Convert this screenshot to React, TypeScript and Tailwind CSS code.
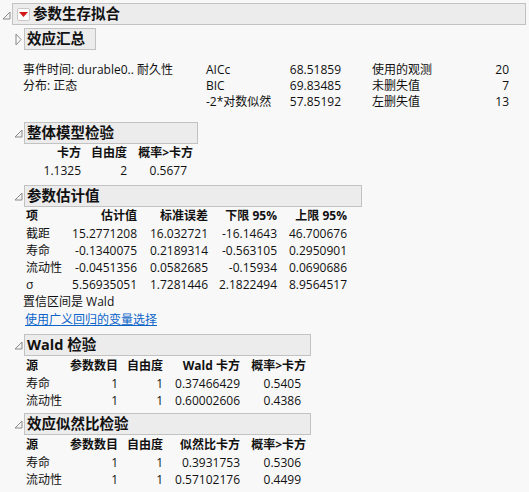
import React from "react";

const FONT = { fontFamily: '"Open Sans", "Noto Sans CJK SC", sans-serif' };

function OpenTri() {
  return (
    <svg width="9" height="9" viewBox="0 0 9 9" className="block">
      <polygon points="8,1 8,8 1,8" fill="#f4f4f4" stroke="#8a8a8a" strokeWidth="1" />
    </svg>
  );
}

function ClosedTri() {
  return (
    <svg width="7" height="13" viewBox="0 0 7 13" className="block">
      <polygon points="1,1 6,6.5 1,12" fill="#fafafa" stroke="#8a8a8a" strokeWidth="1" />
    </svg>
  );
}

function RedMenu() {
  return (
    <span className="flex h-[13px] w-[13px] items-center justify-center rounded-[2px] border border-[#c8c8c8] bg-[#fdfdfd]">
      <svg width="9" height="5" viewBox="0 0 9 5" className="block">
        <polygon points="0,0 9,0 4.5,5" fill="#d31818" />
      </svg>
    </span>
  );
}

interface HeaderProps {
  title: string;
  width: string;
  open?: boolean;
}

function SectionHeader({ title, width, open = true }: HeaderProps) {
  return (
    <div className="flex h-[22px] items-center pl-[12px]">
      <span className={`flex w-[12px] ${open ? "justify-start pl-[2px] pt-[1px]" : "justify-end pr-[2px]"}`}>
        {open ? <OpenTri /> : <ClosedTri />}
      </span>
      <div
        className={`flex h-[22px] items-center border-[1.5px] border-[#c2c2c2] bg-[#ececec] pl-[2px] text-[14.5px] font-bold text-[#111] ${width}`}
      >
        {title}
      </div>
    </div>
  );
}

const num = "text-right whitespace-nowrap";

export default function App() {
  const estimates = [
    ["截距", "15.2771208", "16.032721", "-16.14643", "46.700676"],
    ["寿命", "-0.1340075", "0.2189314", "-0.563105", "0.2950901"],
    ["流动性", "-0.0451356", "0.0582685", "-0.15934", "0.0690686"],
    ["σ", "5.56935051", "1.7281446", "2.1822494", "8.9564517"],
  ];
  const wald = [
    ["寿命", "1", "1", "0.37466429", "0.5405"],
    ["流动性", "1", "1", "0.60002606", "0.4386"],
  ];
  const lr = [
    ["寿命", "1", "1", "0.3931753", "0.5306"],
    ["流动性", "1", "1", "0.57102176", "0.4499"],
  ];

  return (
    <div className="min-h-screen bg-[#f8f8f8] pt-[3px] text-[12px] text-[#111]" style={FONT}>
      {/* top level outline */}
      <div className="flex h-[22px] items-center">
        <span className="flex w-[12px] pl-[2px] pt-[2px]">
          <OpenTri />
        </span>
        <div className="flex h-[22px] w-[514px] items-center gap-[3px] border-[1.5px] border-[#c2c2c2] bg-[#ececec] pl-[4px] text-[14.5px] font-bold">
          <RedMenu />
          <span>参数生存拟合</span>
        </div>
      </div>

      <div className="mt-[3px]">
        <SectionHeader title="效应汇总" width="w-[72px]" open={false} />
      </div>

      <div className="mt-[12px] ml-[23px] grid grid-cols-[183px_74px_61px_31px_98px_39px] leading-[16px]">
        <span className="whitespace-nowrap">事件时间: durable0.. 耐久性</span>
        <span>AICc</span>
        <span className={num}>68.51859</span>
        <span />
        <span>使用的观测</span>
        <span className={num}>20</span>

        <span>分布: 正态</span>
        <span>BIC</span>
        <span className={num}>69.83485</span>
        <span />
        <span>未删失值</span>
        <span className={num}>7</span>

        <span />
        <span className="whitespace-nowrap">-2*对数似然</span>
        <span className={num}>57.85192</span>
        <span />
        <span>左删失值</span>
        <span className={num}>13</span>
      </div>

      <div className="mt-[12px]">
        <SectionHeader title="整体模型检验" width="w-[174px]" />
      </div>
      <div className="ml-[26px] grid grid-cols-[55px_46px_66px]">
        <span className="h-[18px] text-right font-bold leading-[18px]">卡方</span>
        <span className="h-[18px] text-right font-bold leading-[18px]">自由度</span>
        <span className="h-[18px] text-right font-bold leading-[18px]">概率&gt;卡方</span>
        <span className="h-[18px] text-right leading-[18px]">1.1325</span>
        <span className="h-[18px] text-right leading-[18px]">2</span>
        <span className="h-[18px] pr-[6px] text-right leading-[18px]">0.5677</span>
      </div>

      <div className="mt-[5px]">
        <SectionHeader title="参数估计值" width="w-[338px]" />
      </div>
      <div className="ml-[26px] grid grid-cols-[40px_71px_71px_69px_70px] leading-[17px]">
        <span className="h-[18px] font-bold leading-[18px]">项</span>
        <span className="h-[18px] text-right font-bold leading-[18px]">估计值</span>
        <span className="h-[18px] text-right font-bold leading-[18px]">标准误差</span>
        <span className="h-[18px] text-right font-bold leading-[18px] whitespace-nowrap">下限 95%</span>
        <span className="h-[18px] text-right font-bold leading-[18px] whitespace-nowrap">上限 95%</span>
        {estimates.map((r) =>
          r.map((c, i) => (
            <span key={r[0] + i} className={i === 0 ? "h-[17px]" : `h-[17px] ${num}`}>
              {c}
            </span>
          ))
        )}
      </div>
      <div className="ml-[23px] leading-[17px]">置信区间是 Wald</div>
      <div className="ml-[25px] mt-[1px] leading-[18px]">
        <a href="#" className="text-[#0a64c8] underline">使用广义回归的变量选择</a>
      </div>

      <div className="mt-[5px]">
        <SectionHeader title="Wald 检验" width="w-[287px]" />
      </div>
      <div className="ml-[26px] grid grid-cols-[44px_48px_45px_77px_66px] leading-[17px]">
        <span className="h-[19px] font-bold leading-[19px]">源</span>
        <span className="h-[19px] text-right font-bold leading-[19px]">参数数目</span>
        <span className="h-[19px] text-right font-bold leading-[19px]">自由度</span>
        <span className="h-[19px] text-right font-bold leading-[19px] whitespace-nowrap">Wald 卡方</span>
        <span className="h-[19px] text-right font-bold leading-[19px]">概率&gt;卡方</span>
        {wald.map((r) =>
          r.map((c, i) => (
            <span key={r[0] + i} className={i === 0 ? "h-[17px]" : i === 4 ? `h-[17px] pr-[5px] ${num}` : `h-[17px] ${num}`}>
              {c}
            </span>
          ))
        )}
      </div>

      <div className="mt-[4px]">
        <SectionHeader title="效应似然比检验" width="w-[287px]" />
      </div>
      <div className="ml-[26px] grid grid-cols-[44px_48px_45px_77px_66px] leading-[17px]">
        <span className="h-[19px] font-bold leading-[19px]">源</span>
        <span className="h-[19px] text-right font-bold leading-[19px]">参数数目</span>
        <span className="h-[19px] text-right font-bold leading-[19px]">自由度</span>
        <span className="h-[19px] text-right font-bold leading-[19px]">似然比卡方</span>
        <span className="h-[19px] text-right font-bold leading-[19px]">概率&gt;卡方</span>
        {lr.map((r) =>
          r.map((c, i) => (
            <span key={r[0] + i} className={i === 0 ? "h-[17px]" : i === 4 ? `h-[17px] pr-[5px] ${num}` : `h-[17px] ${num}`}>
              {c}
            </span>
          ))
        )}
      </div>
    </div>
  );
}
